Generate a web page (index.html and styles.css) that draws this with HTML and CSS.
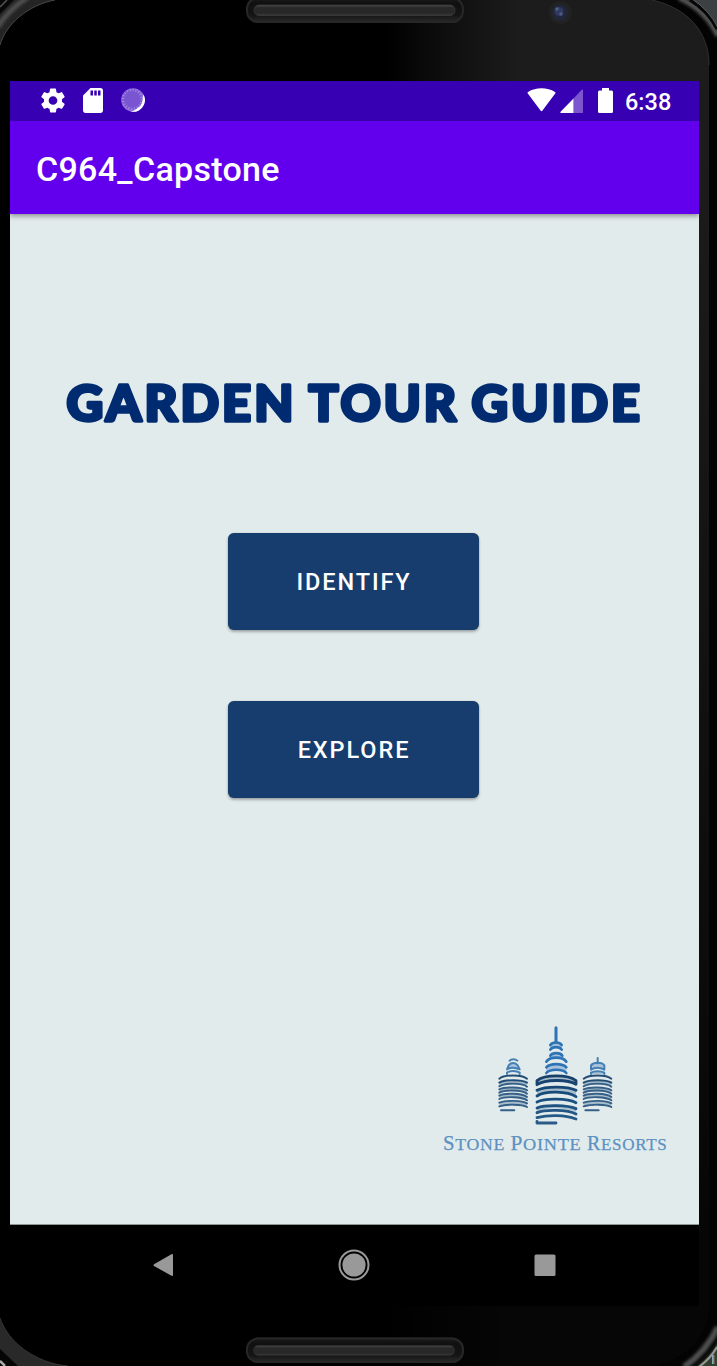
FILE: index.html
```html
<!DOCTYPE html>
<html lang="en">
<head>
<meta charset="utf-8">
<title>C964_Capstone</title>
<link rel="stylesheet" href="styles.css">
</head>
<body>
<div class="phone">
  <svg class="bezel" viewBox="0 0 717 1366" aria-hidden="true">
    <defs>
      <linearGradient id="face" x1="0" x2="1" y1="0" y2="0">
        <stop offset=".54" stop-color="#000"/><stop offset=".6" stop-color="#0b0b0b"/><stop offset=".72" stop-color="#1c1c1c"/><stop offset="1" stop-color="#1c1c1c"/>
      </linearGradient>
      <linearGradient id="shade" x1="0" x2="0" y1="0" y2="1">
        <stop offset=".1" stop-color="#000" stop-opacity="0"/><stop offset=".9" stop-color="#000" stop-opacity=".78"/>
      </linearGradient>
      <linearGradient id="slot" x1="0" x2="0" y1="0" y2="1">
        <stop offset="0" stop-color="#1c1c1c"/><stop offset=".25" stop-color="#101010"/><stop offset=".7" stop-color="#151515"/><stop offset="1" stop-color="#2c2c2c"/>
      </linearGradient>
      <linearGradient id="bar" x1="0" x2="0" y1="0" y2="1">
        <stop offset="0" stop-color="#484848"/><stop offset=".25" stop-color="#292929"/><stop offset=".75" stop-color="#272727"/><stop offset="1" stop-color="#3a3a3a"/>
      </linearGradient>
      <filter id="soft" x="-20%" y="-20%" width="140%" height="140%"><feGaussianBlur stdDeviation="1.8"/></filter>
    </defs>
    <rect width="717" height="1366" fill="url(#face)"/>
    <rect width="717" height="1366" fill="url(#shade)"/>
    <path d="M0 0H55C28 5 6 24 0 45Z" fill="#242424"/>
    <path d="M-2 27C5 14 16 5 28 -3" fill="none" stroke="#505050" stroke-width="5" filter="url(#soft)"/>
    <path d="M0 0H14L0 14Z" fill="#080808"/>
    <path d="M0 7L7 0" stroke="#555" stroke-width="1.5"/>
    <path d="M0 45C6 24 28 5 55 0" fill="none" stroke="#484848" stroke-width="1"/>
    <path d="M652 0C687 8 709 31 709 65V1308C709 1334 688 1358 655 1366H717V0Z" fill="#030303"/>
    <path d="M652 0C687 8 709 31 709 65" fill="none" stroke="#303030" stroke-width="1"/>
    <path d="M679 -2C695 5 709 17 718 36" fill="none" stroke="#555" stroke-width="5" filter="url(#soft)"/>
    <path d="M693 0H717V30Q708 12 693 0Z" fill="#3c4043"/>
    <path d="M690 0Q708 11 717 29" fill="none" stroke="#050505" stroke-width="3"/>
    <path d="M692 -1Q709 10 718 28" fill="none" stroke="#666" stroke-width=".8"/>
    <path d="M0 1318C8 1342 35 1363 68 1366H0Z" fill="#292929"/>
    <path d="M0 1318C8 1342 35 1363 68 1366" fill="none" stroke="#343434"/>
    <path d="M0 1349L18 1366H0Z" fill="#050505"/><path d="M0 1361L5 1366" stroke="#aaa" stroke-width="2.5"/>
    <path d="M684 1367Q706 1352 718 1327" fill="none" stroke="#505050" stroke-width="6" filter="url(#soft)"/>
    <path d="M697 1366Q711 1355 717 1343V1366Z" fill="#34402f"/>
    <path d="M692 1368Q709 1357 718 1340" fill="none" stroke="#111" stroke-width="2"/>
    <path d="M699 1367Q711 1358 717 1347" fill="none" stroke="#999" stroke-width="2"/>
    <path d="M712.5 1355V1364" stroke="#8aa9c0"/><path d="M713.8 1355V1364" stroke="#c5a080"/>
    <rect x="246" y="-3" width="218" height="26" rx="12" fill="url(#slot)"/>
    <rect x="247" y="-2" width="216" height="24" rx="11" fill="none" stroke="#272727" stroke-width="2"/>
    <rect x="254" y="5" width="201" height="10.5" rx="5" fill="url(#bar)" stroke="#3d3d3d" stroke-width=".7"/>
    <rect x="246" y="1337.5" width="218" height="25.5" rx="12" fill="url(#slot)"/>
    <rect x="247" y="1338.5" width="216" height="23.5" rx="11" fill="none" stroke="#272727" stroke-width="2"/>
    <rect x="253" y="1345.5" width="202" height="10" rx="5" fill="url(#bar)"/>
    <circle cx="560.5" cy="12.5" r="11.5" fill="#222"/>
    <circle cx="560" cy="12.5" r="8" fill="#22263a"/>
    <circle cx="559" cy="11.5" r="4.5" fill="#30395f"/><circle cx="557" cy="9" r="1.7" fill="#4a6286"/><circle cx="561" cy="14" r="1.8" fill="#515b80"/>
  </svg>

  <main class="screen">
    <div class="status">
      <div class="notices">
        <svg class="gear" viewBox="2 2 20 20"><path fill="#fff" d="M19.43 12.98c.04-.32.07-.64.07-.98s-.03-.66-.07-.98l2.11-1.65c.19-.15.24-.42.12-.64l-2-3.46c-.12-.22-.39-.3-.61-.22l-2.49 1c-.52-.4-1.08-.73-1.69-.98l-.38-2.65C14.46 2.18 14.25 2 14 2h-4c-.25 0-.46.18-.49.42l-.38 2.65c-.61.25-1.17.59-1.69.98l-2.49-1c-.23-.09-.49 0-.61.22l-2 3.46c-.13.22-.07.49.12.64l2.11 1.65c-.04.32-.07.65-.07.98s.03.66.07.98l-2.11 1.65c-.19.15-.24.42-.12.64l2 3.46c.12.22.39.3.61.22l2.49-1c.52.4 1.08.73 1.69.98l.38 2.65c.03.24.24.42.49.42h4c.25 0 .46-.18.49-.42l.38-2.65c.61-.25 1.17-.59 1.69-.98l2.49 1c.23.09.49 0 .61-.22l2-3.46c.12-.22.07-.49-.12-.64zM12 15.6a3.6 3.6 0 1 1 0-7.2 3.6 3.6 0 0 1 0 7.2z"/></svg>
        <svg class="card" viewBox="4 2 16 20"><path fill="#fff" d="M18 2h-8L4 8v12c0 1.1.9 2 2 2h12c1.1 0 2-.9 2-2V4c0-1.1-.9-2-2-2zm-6 6h-2V4h2v4zm3 0h-2V4h2v4zm3 0h-2V4h2v4z"/></svg>
        <svg class="sync" viewBox="0 0 24 24"><circle cx="12" cy="12" r="11.8" fill="#8f70dc"/><path d="M22.500 6.500A11.800 11.800 0 0 1 9.500 23.500Q19 22 22.500 6.500Z" fill="#fff"/><circle cx="11.300" cy="11.300" r="10.300" fill="#7a55d2"/><circle cx="11.300" cy="11.300" r="9.300" fill="none" stroke="#a88fe3" stroke-width="2.200" stroke-dasharray="1 1.920"/></svg>
      </div>
      <div class="system">
        <svg class="wifi" viewBox="0 0 29 24"><path fill="#fff" d="M.8 5.600C.2 5 .4 4.400 1 3.900C8.500-1 20.500-1 28 3.900C28.700 4.400 28.700 5 28.200 5.600L15.500 22.600Q14.500 23.800 13.500 22.600Z"/></svg>
        <svg class="signal" viewBox="0 0 23 24"><path fill="#7c55cf" d="M13.500 9.500L21.500 1Q23 0 23 1.500V24H13.500Z"/><path fill="#fff" d="M13.500 9.500V24H1Q-.3 23.800.8 22.500Z"/></svg>
        <svg class="battery" viewBox="0 0 15 25"><path fill="#fff" d="M4 0H11V2.500H13.500Q15 2.500 15 4V23.500Q15 25 13.500 25H1.500Q0 25 0 23.500V4Q0 2.500 1.500 2.500H4Z"/></svg>
        <span class="clock">6:38</span>
      </div>
    </div>
    <header class="appbar">C964_Capstone</header>
    <section class="content">
      <svg class="title" viewBox="0 0 590 54" role="heading" aria-level="1">
        <text x="10.5" y="43.300" textLength="230" lengthAdjust="spacingAndGlyphs">GARDEN</text>
        <text x="252.500" y="43.300" textLength="150.500" lengthAdjust="spacingAndGlyphs">TOUR</text>
        <text x="415.500" y="43.300" textLength="171.500" lengthAdjust="spacingAndGlyphs">GUIDE</text>
      </svg>
      <div class="actions">
        <button class="btn identify">IDENTIFY</button>
        <button class="btn explore">EXPLORE</button>
      </div>
      <div class="brand">
        <svg class="towers" viewBox="0 0 390 330" aria-hidden="true">
          <defs>
            <linearGradient id="tower" gradientUnits="userSpaceOnUse" x1="0" y1="165" x2="0" y2="315"><stop stop-color="#173f68"/><stop offset=".5" stop-color="#184f80"/><stop offset="1" stop-color="#2d5c89"/></linearGradient>
          </defs>
          <g fill="none" stroke-linecap="round" stroke-linejoin="round">
            <g stroke="#2d73b5" stroke-width="8">
              <g fill="#a9c3dc" stroke="none">
                <path d="M181 74Q198 56 215 74V89Q198 76 181 89ZM169 125L181 106Q198 94 217 106L229 125Q198 104 169 125ZM169 141Q198 124 229 141V160Q198 142 169 160Z"/>
              </g>
              <path d="M198 23V65" stroke-width="9"/>
              <path d="M181 75C187 65 209 65 215 75M181 89C187 79 209 79 215 89"/>
              <path d="M181 107C187 97 211 97 217 107M169 125C180 109 218 109 229 125"/>
              <path d="M169 142C180 129 218 129 229 142M169 159C180 146 218 146 229 159"/>
            </g>
            <g stroke="url(#tower)" stroke-width="8.5">
              <g fill="#a6bdcc" stroke="none">
                <path d="M141 182C165 163 233 163 258 182V193C233 174 165 178 141 194ZM141 211C165 197 233 197 258 211V230C233 214 165 213 141 228ZM141 263C165 251 233 251 258 263V276C233 263 165 261 141 273Z"/>
              </g>
              <path d="M141 182C165 163 233 163 258 182V193C233 177 165 178 141 194Z"/>
              <path d="M141 211C165 198 233 198 258 211M141 228C165 211 233 213 258 230"/>
              <path d="M141 246C165 234 233 235 258 248"/>
              <path d="M141 264C165 254 233 255 258 266M141 278C165 268 233 269 258 282"/>
              <path d="M141 293C175 284 225 284 258 297M141 304V309H198"/>
            </g>
            <g stroke="#4580b5" stroke-width="6">
              <path fill="#a9c3dc" d="M56 136C64 127 76 127 83 136L89 148C76 142 61 142 51 148ZM303 136C311 126 336 126 343 136V149C330 141 313 141 303 149ZM303 162V158C313 152 332 152 343 158V162"/>
              <path d="M59 122C64 116 76 116 82 122M51 162V158C61 151 79 151 89 158V162M323 114V130"/>
            </g>
            <g id="side" stroke="#355f86" stroke-width="5.8">
              <path stroke="none" fill="#a6bdcc" d="M28 188C43 179 96 179 111 188V201C94 192 45 192 28 199ZM28 208C43 202 96 202 111 209V221C94 212 45 212 28 218ZM28 227C43 222 96 222 111 229V241C94 233 45 232 28 237ZM28 247C55 242 96 243 111 249V262C94 254 55 256 28 259Z"/>
              <path stroke="#244d75" d="M28 176C43 163 96 163 111 176M28 188C43 178 96 178 111 188"/>
              <path d="M28 199C43 188 96 188 111 200M28 208C43 200 96 200 111 211M28 218C43 209 96 209 111 221M28 227C43 219 96 219 111 231M28 237C43 229 96 229 111 241M28 248C50 240 96 241 111 250M28 259C50 252 96 252 111 261M33 271H73"/>
            </g>
            <use href="#side" x="253"/>
          </g>
        </svg>
        <svg class="brandname" viewBox="0 0 230 24">
          <text x="3" y="17.500" textLength="62" lengthAdjust="spacingAndGlyphs">S<tspan class="small">TONE</tspan></text>
          <text x="70.500" y="17.500" textLength="71" lengthAdjust="spacingAndGlyphs">P<tspan class="small">OINTE</tspan></text>
          <text x="147" y="17.500" textLength="80.500" lengthAdjust="spacingAndGlyphs">R<tspan class="small">ESORTS</tspan></text>
        </svg>
      </div>
    </section>
    <nav class="nav">
      <svg class="navicon" viewBox="0 0 32 32"><path d="M7 15.300L24 5.500Q26 4.500 26 6V26Q26 27.500 24 26.500L7 17Q6 16.200 7 15.300Z" fill="#999"/></svg>
      <svg class="navicon" viewBox="0 0 32 32"><circle cx="16" cy="16" r="14.5" fill="none" stroke="#999" stroke-width="2"/><circle cx="16" cy="16" r="11.6" fill="#999"/></svg>
      <svg class="navicon" viewBox="0 0 32 32"><rect x="5.5" y="5.5" width="21" height="21.5" rx="1.5" fill="#999"/></svg>
    </nav>
  </main>
</div>
</body>
</html>
```
FILE: styles.css
```css
* { box-sizing: border-box; }
body { margin: 0; background: #000; font-family: Roboto, sans-serif; }
svg { display: block; }
.phone { position: relative; width: 717px; height: 1366px; padding: 81px 18px 60px 10px; overflow: hidden; }
.bezel { position: absolute; inset: 0; width: 717px; height: 1366px; }
.screen { position: relative; width: 689px; height: 1225px; display: flex; flex-direction: column; background: #000; }
.status { height: 39.5px; flex: none; background: #3700b3; display: flex; justify-content: space-between; align-items: flex-start; padding: 7px 27px 0 31px; }
.notices, .system { display: flex; align-items: flex-start; }
.gear { width: 24px; height: 25px; }
.card { width: 20px; height: 25px; margin-left: 18px; }
.sync { width: 24px; height: 24px; margin-left: 18px; }
.wifi { width: 29px; height: 24px; }
.signal { width: 23px; height: 24px; margin: 1px 0 0 4px; }
.battery { width: 15px; height: 25px; margin-left: 15px; }
.clock { color: #fff; font-size: 23.5px; font-weight: 500; line-height: 28px; margin-left: 12px; width: 47px; white-space: nowrap; }
.appbar { height: 93.5px; flex: none; background: #6200ee; color: #fff; font-size: 34px; font-weight: 500; line-height: 97px; letter-spacing: .3px; padding-left: 26px; box-shadow: 0 2px 5px rgba(0,0,0,.4); clip-path: inset(0 0 -12px 0); z-index: 1; }
.content { height: 1010.5px; flex: none; background: #e2ebec; display: flex; flex-direction: column; border-bottom: 1px solid #8b9795; }
.title { width: 590px; height: 54px; margin: 164px 0 0 46px; overflow: visible; }
.title text { font: 900 49.5px Lato, sans-serif; letter-spacing: 3px; fill: #002b70; stroke: #002b70; stroke-width: 3.4px; stroke-linejoin: round; }
.actions { display: flex; flex-direction: column; gap: 71px; margin: 100.5px 0 0 218px; width: 251px; }
.btn { height: 97px; padding: 2px 0 0; border: 0; border-radius: 6px; background: #163d6d; color: #fff; font: 500 23.5px/95px Roboto, sans-serif; letter-spacing: 1.9px; text-indent: 1px; box-shadow: 0 2px 3px rgba(0,0,0,.28), 0 0 1px rgba(0,0,0,.4); }
.brand { margin: auto 29px 68px auto; width: 230px; display: flex; flex-direction: column; align-items: flex-start; }
.towers { width: 130px; height: 110px; margin-left: 50px; }
.brandname { width: 230px; height: 24px; margin-top: 2px; overflow: visible; }
.brandname text { font: 20.5px "Liberation Serif", serif; letter-spacing: .7px; fill: #5c91c2; stroke: #5c91c2; stroke-width: .25px; }
.brandname .small { font-size: 17.5px; }
.nav { flex: 1; display: flex; justify-content: space-between; padding: 24px 138.5px 0 137px; }
.navicon { width: 32px; height: 32px; }
```
